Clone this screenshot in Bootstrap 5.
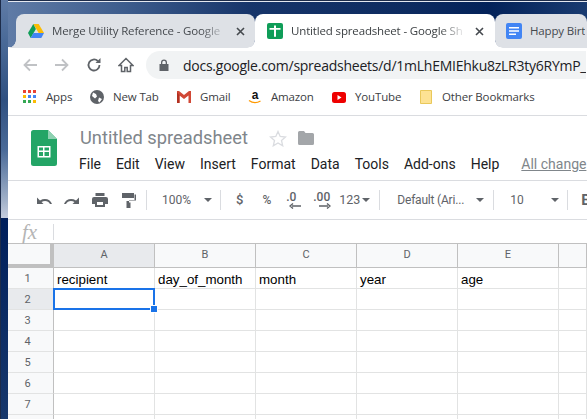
<!DOCTYPE html>
<html lang="en">
<head>
<meta charset="UTF-8">
<meta name="viewport" content="width=device-width, initial-scale=1.0">
<title>Untitled spreadsheet - Google Sheets</title>
<link href="https://cdn.jsdelivr.net/npm/bootstrap@5.3.3/dist/css/bootstrap.min.css" rel="stylesheet">
<style>
    html, body { height: 419px; overflow: hidden; }
    body { background: #fff; font-family: "Roboto", "Liberation Sans", sans-serif; color: #202124; }
    .win { width: 587px; height: 419px; overflow: hidden; }
    .edge { width: 8px; flex: none; border-left: 1px solid #1d2c4a;
        background: linear-gradient(to bottom, #5f7ba6 0, #4a6a98 40px, #2f5080 100px, #4a6a98 150px, #a0b0c8 200px, #c5cdde 218px, #001f5b 218px, #17386c 419px); }
    .main { width: 579px; flex: none; }

    /* tab strip */
    .strip { height: 47px; padding-top: 13px; border-top: 1px solid #1d2c4a; box-shadow: inset 0 1px 0 #e4e8f0;
        background: linear-gradient(90deg, #5f7ba6 0, #3f5e8e 110px, #17356a 240px, #0d2b60 400px, #032259 480px, #1b3d72 587px); }
    .strip { padding-left: 8px; }
    .gtab { height: 34px; flex: none; position: relative; background: #dee1e6; font-family: "Open Sans", "Noto Sans", sans-serif; font-size: 11.5px; letter-spacing: -.15px; color: #45494e; border-radius: 8px; }
    .gtab-a { width: 239px; padding-left: 12px; border-bottom-left-radius: 0; }
    .gtab-b { width: 240px; padding-left: 12px; background: #fff; color: #3c4043; border-bottom-left-radius: 0; border-bottom-right-radius: 0; }
    .gtab-c { width: 92px; padding-left: 11px; border-bottom-right-radius: 0; }
    .gtab-a::before, .gtab-b::before, .gtab-b::after { content: ""; position: absolute; bottom: 0; width: 8px; height: 8px; }
    .gtab-a::before { left: -8px; background: radial-gradient(circle at 0 0, transparent 7.5px, #dee1e6 8px); }
    .gtab-b::before { left: -8px; background: radial-gradient(circle at 0 0, transparent 7.5px, #fff 8px); z-index: 1; }
    .gtab-b::after { right: -8px; background: radial-gradient(circle at 100% 0, transparent 7.5px, #fff 8px); z-index: 1; }
    .tab-txt { white-space: nowrap; overflow: hidden; -webkit-mask-image: linear-gradient(90deg, #000 85%, transparent); mask-image: linear-gradient(90deg, #000 85%, transparent); }
    .gtab-a .tab-txt { width: 175px; margin-left: 8px; }
    .gtab-b .tab-txt { width: 175px; margin-left: 8px; }
    .gtab-c .tab-txt { margin-left: 8px; -webkit-mask-image: none; mask-image: none; }
    .tab-x { margin-left: 9px; flex: none; }

    /* address and bookmarks */
    .addr { height: 34px; padding-left: 14px; padding-top: 2px; }
    .nav-ic { width: 16px; height: 16px; flex: none; margin-right: 16px; }
    .pill { height: 28px; width: 440px; margin-left: -4px; background: #f1f3f4; border-radius: 14px 0 0 14px; padding-left: 13px; font-family: "Open Sans", "Noto Sans", sans-serif; font-size: 14px; color: #202124; white-space: nowrap; overflow: hidden; flex: none; }
    .pill span { margin-left: 14px; letter-spacing: -.25px; }
    .marks { height: 35px; padding-left: 15px; padding-bottom: 2px; font-family: "Open Sans", "Noto Sans", sans-serif; font-size: 11.5px; letter-spacing: -.15px; color: #3c4043; border-bottom: 1px solid #dadce0; white-space: nowrap; }
    .mark-ic { margin-right: 9px; flex: none; }
    .mark-txt { flex: none; }

    /* docs header */
    .head { height: 65px; border-bottom: 1px solid #dadce0; }
    .logo-col { width: 72px; flex: none; padding: 14px 0 0 23px; }
    .doc-title { font-size: 18.3px; color: #80868b; line-height: 22px; margin-top: 11px; }
    .menu-row { font-size: 14px; color: #202124; gap: 15px; line-height: 18px; margin-top: 6px; margin-left: -1px; white-space: nowrap; }
    .saved { color: #80868b; text-decoration: underline; margin-left: 7px; }
    .title-ic { margin-top: 11px; flex: none; }

    /* toolbar */
    .tools { height: 39px; border-bottom: 1px solid #dadce0; font-size: 12px; color: #5f6368; padding-left: 28px; white-space: nowrap; overflow: hidden; }
    .tbar-sep { width: 1px; height: 20px; background: #dadce0; flex: none; }
    .tb-ic { flex: none; }
    .caret-d { width: 0; height: 0; border-left: 4px solid transparent; border-right: 4px solid transparent; border-top: 4px solid #5f6368; flex: none; }
    .stack-ic { position: relative; flex: none; line-height: 14px; font-weight: 500; margin-top: -6px; }
    .stack-ic svg { position: absolute; top: 13px; left: 3px; }

    /* formula bar */
    .fbar { height: 24px; border-bottom: 1px solid #c0c0c0; }
    .fx { width: 45px; font-family: "Liberation Serif", serif; font-style: italic; font-size: 21px; color: #b5b5b5; padding-left: 14px; line-height: 22px; flex: none; }
    .fbar-sep { width: 1px; height: 16px; background: #dadce0; flex: none; }

    /* grid */
    .sheet { display: grid; grid-template-columns: 46px 101px 101px 101px 101px 101px 28px; grid-template-rows: 24px; grid-auto-rows: 21px; font-size: 11px; color: #5f6368; }
    .sheet > div { background: #fff; border-right: 1px solid #e2e3e3; border-bottom: 1px solid #e2e3e3; display: flex; align-items: center; min-width: 0; overflow: hidden; }
    .sheet > .corner { background: #f8f9fa; border-right: 4px solid #c0c0c0; border-bottom: 4px solid #c0c0c0; }
    .sheet > .col-h { justify-content: center; background: #f8f9fa; border-right-color: #c0c0c0; border-bottom-color: #c0c0c0; }
    .sheet > .row-h { justify-content: center; background: #f8f9fa; border-right-color: #c0c0c0; border-bottom-color: #e2e3e3; padding-right: 6px; padding-top: 2px; }
    .sheet > .col-on, .sheet > .row-on { background: #e8eaed; }
    .sheet > .val { font-family: "Liberation Sans", sans-serif; font-size: 13.33px; color: #000; padding-left: 3px; padding-top: 3px; }
    .sheet > .cell-sel { overflow: visible; position: relative; z-index: 1; }
    .sel-box { position: absolute; left: -1px; top: -1px; right: -1px; bottom: -1px; border: 2px solid #1a73e8; }
    .sel-dot { position: absolute; right: -4px; bottom: -4px; width: 6px; height: 6px; background: #1a73e8; outline: 1px solid #fff; }
</style>
</head>
<body>
<div class="win d-flex">
    <div class="edge"></div>
    <div class="main">
        <div class="strip d-flex">
            <div class="gtab gtab-a d-flex align-items-center">
                <svg width="16" height="14" viewBox="0 0 16 14"><path d="M5.3 0h5.4l5.3 9h-5.3z" fill="#fbbc04"/><path d="M5.3 0 0 9l2.7 5 5.2-9z" fill="#0f9d58"/><path d="M2.7 14h10.6L16 9H5.4z" fill="#4285f4"/></svg>
                <div class="tab-txt">Merge Utility Reference - Google</div>
                <svg class="tab-x" width="9" height="9" viewBox="0 0 9 9"><path d="M1 1l7 7M8 1 1 8" stroke="#45494e" stroke-width="1.6"/></svg>
            </div>
            <div class="gtab gtab-b d-flex align-items-center">
                <svg width="16" height="16" viewBox="0 0 16 16"><rect width="16" height="16" rx="2" fill="#0f9d58"/><path d="M7 2.500h2V5h4.500v1.800H9v7H7v-7H2.500V5H7z" fill="#fff"/></svg>
                <div class="tab-txt">Untitled spreadsheet - Google Sh</div>
                <svg class="tab-x" width="9" height="9" viewBox="0 0 9 9"><path d="M1 1l7 7M8 1 1 8" stroke="#45494e" stroke-width="1.6"/></svg>
            </div>
            <div class="gtab gtab-c d-flex align-items-center">
                <svg width="16" height="16" viewBox="0 0 16 16" style="flex:none"><rect width="16" height="16" rx="2" fill="#4285f4"/><path d="M3 4h10v1.6H3zM3 7.2h10v1.6H3zM3 10.4h7V12H3z" fill="#fff"/></svg>
                <div class="tab-txt">Happy Birt</div>
            </div>
        </div>

        <div class="addr d-flex align-items-center">
            <svg class="nav-ic" viewBox="0 0 16 16"><path d="M15 8H3M8 2.5 2.5 8 8 13.500" fill="none" stroke="#c0c2c5" stroke-width="1.8"/></svg>
            <svg class="nav-ic" viewBox="0 0 16 16"><path d="M1 8h12M8 2.500 13.500 8 8 13.500" fill="none" stroke="#c0c2c5" stroke-width="1.8"/></svg>
            <svg class="nav-ic" viewBox="0 0 16 16"><path d="M13.500 8a5.500 5.500 0 1 1-1.700-4" fill="none" stroke="#5f6368" stroke-width="1.800"/><path d="M14.500 1v5h-5z" fill="#5f6368"/></svg>
            <svg class="nav-ic" viewBox="0 0 16 16"><path d="M8 1.500 1 8.500h2.500v6h3.300v-4h2.400v4h3.300v-6H15z" fill="none" stroke="#5f6368" stroke-width="1.500"/></svg>
            <div class="pill d-flex align-items-center">
                <svg width="10" height="12" viewBox="0 0 10 12" style="flex:none"><path d="M2 5V3.500a3 3 0 0 1 6 0V5h1.500v7H.5V5zm1.300 0h3.400V3.500a1.700 1.700 0 0 0-3.400 0z" fill="#5f6368"/></svg>
                <span>docs.google.com/spreadsheets/d/1mLhEMIEhku8zLR3ty6RYmP_K</span>
            </div>
        </div>

        <div class="marks d-flex align-items-center">
            <svg class="mark-ic" width="14" height="14" viewBox="0 0 14 14">
                <rect x="0" y="0" width="3" height="3" fill="#ea4335"/><rect x="5" y="0" width="3" height="3" fill="#ea4335"/><rect x="10" y="0" width="3" height="3" fill="#ea4335"/>
                <rect x="0" y="5" width="3" height="3" fill="#fbbc04"/><rect x="5" y="5" width="3" height="3" fill="#4285f4"/><rect x="10" y="5" width="3" height="3" fill="#4285f4"/>
                <rect x="0" y="10" width="3" height="3" fill="#34a853"/><rect x="5" y="10" width="3" height="3" fill="#34a853"/><rect x="10" y="10" width="3" height="3" fill="#fbbc04"/>
            </svg>
            <span class="mark-txt" style="width:44px">Apps</span>
            <svg class="mark-ic" width="14" height="14" viewBox="0 0 14 14"><circle cx="7" cy="7" r="7" fill="#5f6368"/><path d="M3 2.500 6 4l1 2.500-2 2-3-2.500zM9 7.500l3 1.500-2.500 3.500L8 11z" fill="#fff"/></svg>
            <span class="mark-txt" style="width:64px">New Tab</span>
            <svg class="mark-ic" width="14" height="12" viewBox="0 0 14 12"><path d="M0 0h2l5 4 5-4h2v12h-2.500V4.500L7 8 2.500 4.500V12H0z" fill="#d14836"/><path d="M2.500 4.500V12H0V1z" fill="#b23121"/></svg>
            <span class="mark-txt" style="width:48px">Gmail</span>
            <svg class="mark-ic" width="14" height="16" viewBox="0 0 14 16"><text x="7" y="9.500" text-anchor="middle" font-family="Liberation Sans, sans-serif" font-weight="700" font-size="12" fill="#111">a</text><path d="M1 11.500c3.500 2.500 8 2.500 11.500.5" fill="none" stroke="#f90" stroke-width="1.300"/></svg>
            <span class="mark-txt" style="width:61px">Amazon</span>
            <svg class="mark-ic" width="14" height="11" viewBox="0 0 14 11"><rect width="14" height="11" rx="2.500" fill="#e00"/><path d="M5.500 3v5L9.500 5.500z" fill="#fff"/></svg>
            <span class="mark-txt" style="width:65px">YouTube</span>
            <svg class="mark-ic" style="margin-right:10px" width="12" height="14" viewBox="0 0 12 14"><path d="M.5.500h11v13h-11z" fill="#fde293" stroke="#e9c85a"/></svg>
            <span class="mark-txt">Other Bookmarks</span>
        </div>

        <div class="head d-flex">
            <div class="logo-col">
                <svg width="26" height="36" viewBox="0 0 26 36"><path d="M2.500 0H17l9 9v24.500a2.500 2.500 0 0 1-2.500 2.500h-21A2.500 2.500 0 0 1 0 33.500v-31A2.500 2.500 0 0 1 2.500 0z" fill="#23a566"/><path d="M17 0l9 9h-9z" fill="#8ed1b1"/><path d="M6.500 16h13v11.500h-13zM8 17.500V20.500h4V17.500zm5.500 0v3h4.500v-3zM8 22v4h4v-4zm5.500 0v4h4.500v-4z" fill="#fff" fill-rule="evenodd"/></svg>
            </div>
            <div class="flex-grow-1">
                <div class="d-flex align-items-center">
                    <div class="doc-title">Untitled spreadsheet</div>
                    <svg class="title-ic" style="margin-left:21px" width="18" height="17" viewBox="0 0 18 17"><path d="M9 1.500l2.200 5 5.300.5-4 3.500 1.200 5.300L9 13l-4.700 2.800 1.200-5.300-4-3.500 5.300-.5z" fill="none" stroke="#dadce0" stroke-width="1.300"/></svg>
                    <svg class="title-ic" style="margin-left:11px" width="16" height="14" viewBox="0 0 16 14"><path d="M1.500 0H6l1.500 2h7A1.500 1.500 0 0 1 16 3.500v9a1.500 1.500 0 0 1-1.500 1.500h-13A1.500 1.500 0 0 1 0 12.500v-11A1.500 1.500 0 0 1 1.500 0z" fill="#a3a6a9"/></svg>
                </div>
                <div class="menu-row d-flex">
                    <span>File</span><span>Edit</span><span>View</span><span>Insert</span><span>Format</span><span>Data</span><span>Tools</span><span>Add-ons</span><span>Help</span>
                    <span class="saved">All change</span>
                </div>
            </div>
        </div>

        <div class="tools d-flex align-items-center">
            <svg class="tb-ic" width="16" height="8" viewBox="0 0 16 8"><path d="M16 8C14.500 3.500 9 1.500 4 4.500L1 1.500V8h6.500L5.500 6c3.500-2 7-1 8.500 2z" fill="#5f6368"/></svg>
            <svg class="tb-ic" style="margin-left:12px" width="16" height="8" viewBox="0 0 16 8"><path d="M0 8C1.500 3.500 7 1.500 12 4.500L15 1.500V8H8.500l2-2c-3.500-2-7-1-8.500 2z" fill="#5f6368"/></svg>
            <svg class="tb-ic" style="margin-left:12px" width="16" height="14" viewBox="0 0 16 14"><path d="M3.500 0h9v3h-9zM2 4h12a2 2 0 0 1 2 2v5h-3v3H3v-3H0V6a2 2 0 0 1 2-2zm3 5v3h6V9z" fill="#5f6368" fill-rule="evenodd"/></svg>
            <svg class="tb-ic" style="margin-left:14px" width="14" height="15" viewBox="0 0 14 15"><path d="M0 0h12v5H0zM12.500 1.500H14v6H7v2H8.500v5.500h-4V8h8z" fill="#5f6368"/></svg>
            <div class="tbar-sep" style="margin-left:10px"></div>
            <span style="margin-left:15px;width:42px;flex:none">100%</span>
            <div class="caret-d"></div>
            <div class="tbar-sep" style="margin-left:8px"></div>
            <span style="margin-left:15px;font-weight:500;font-size:13px;flex:none">$</span>
            <span style="margin-left:19px;font-weight:500;flex:none">%</span>
            <span class="stack-ic" style="margin-left:15px;width:27px"><span>.0</span><svg width="12" height="6" viewBox="0 0 12 6"><path d="M12 3H3M4 .5 1 3l3 2.500" fill="none" stroke="#5f6368" stroke-width="1.400"/></svg></span>
            <span class="stack-ic" style="width:26px"><span>.00</span><svg style="left:6px" width="12" height="6" viewBox="0 0 12 6"><path d="M0 3h9M8 .5 11 3 8 5.500" fill="none" stroke="#5f6368" stroke-width="1.400"/></svg></span>
            <span style="font-size:12.500px;flex:none">123</span>
            <div class="caret-d" style="margin-left:2px"></div>
            <div class="tbar-sep" style="margin-left:9px"></div>
            <span style="margin-left:17px;width:79px;flex:none;letter-spacing:-.2px">Default (Ari...</span>
            <div class="caret-d"></div>
            <div class="tbar-sep" style="margin-left:9px"></div>
            <span style="margin-left:16px;width:41px;flex:none">10</span>
            <div class="caret-d"></div>
            <div class="tbar-sep" style="margin-left:8px"></div>
            <span style="margin-left:13px;font-weight:700;font-size:15px;flex:none">B</span>
        </div>

        <div class="fbar d-flex align-items-center">
            <div class="fx">fx</div>
            <div class="fbar-sep"></div>
        </div>

        <div class="sheet">
            <div class="corner"></div>
            <div class="col-h col-on">A</div><div class="col-h">B</div><div class="col-h">C</div><div class="col-h">D</div><div class="col-h">E</div><div class="col-h"></div>

            <div class="row-h">1</div>
            <div class="val">recipient</div><div class="val">day_of_month</div><div class="val">month</div><div class="val">year</div><div class="val">age</div><div></div>

            <div class="row-h row-on">2</div>
            <div class="cell-sel"><div class="sel-box"><div class="sel-dot"></div></div></div><div></div><div></div><div></div><div></div><div></div>

            <div class="row-h">3</div><div></div><div></div><div></div><div></div><div></div><div></div>
            <div class="row-h">4</div><div></div><div></div><div></div><div></div><div></div><div></div>
            <div class="row-h">5</div><div></div><div></div><div></div><div></div><div></div><div></div>
            <div class="row-h">6</div><div></div><div></div><div></div><div></div><div></div><div></div>
            <div class="row-h">7</div><div></div><div></div><div></div><div></div><div></div><div></div>
            <div class="row-h"></div><div></div><div></div><div></div><div></div><div></div><div></div>
        </div>
    </div>
</div>
<script src="https://cdn.jsdelivr.net/npm/bootstrap@5.3.3/dist/js/bootstrap.bundle.min.js"></script>
</body>
</html>
